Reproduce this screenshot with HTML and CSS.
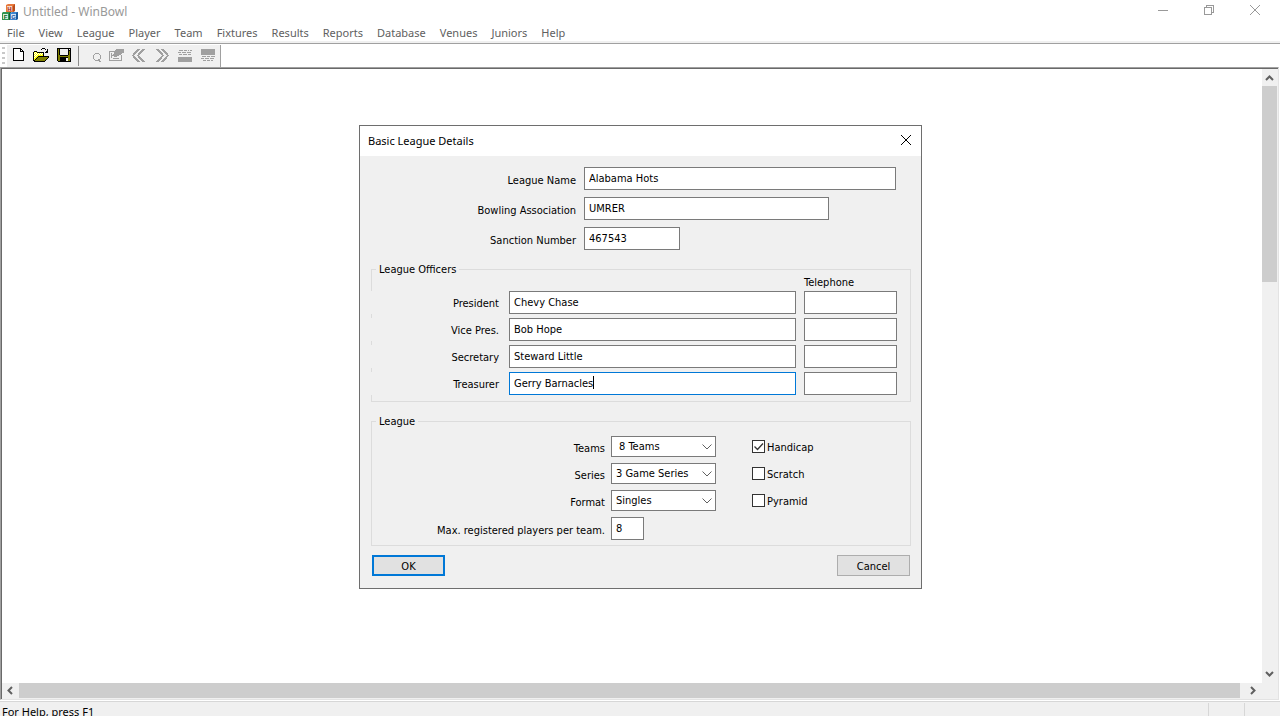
FILE: index.html
```html
<!DOCTYPE html>
<html lang="en">
<head>
<meta charset="utf-8">
<title>Untitled - WinBowl</title>
<link rel="stylesheet" href="styles.css">
</head>
<body>
<div class="app">
  <header class="titlebar">
    <svg class="app-icon" width="18" height="18" viewBox="0 0 18 18" aria-hidden="true">
      <path fill="#e8783c" d="M5 2l2-1h7v7l-2 1H5z"/><path fill="#b84c1c" d="M12 3l2-2v7l-2 1z"/>
      <path fill="#2f9350" d="M1 10l1-1h8v8H1z"/><path fill="#14602c" d="M8 10l2-1v7l-2 1z"/>
      <path fill="#3d86d0" d="M9 10l2-1h6v7l-2 1H9z"/><path fill="#1c5a9c" d="M15 10l2-1v7l-2 1z"/>
      <path fill="#f4d9c4" d="M6 3h5v5H6z"/><path fill="#d6efdc" d="M2 11h5v5H2z"/><path fill="#d3e6f8" d="M10 11h5v5h-5z"/>
      <text class="cube" x="8.500" y="8" fill="#a01818">H</text>
      <text class="cube" x="4.500" y="16" fill="#0c6020">F</text>
      <text class="cube" x="12.500" y="16" fill="#1850a0">G</text>
    </svg>
    <h1 class="app-title">Untitled - WinBowl</h1>
    <div class="caption">
      <button class="caption-btn" aria-label="Minimize"><svg width="10" height="10" viewBox="0 0 10 10"><path d="M0 5.500h10"/></svg></button>
      <button class="caption-btn" aria-label="Restore"><svg width="10" height="10" viewBox="0 0 10 10"><path d="M.5 2.500h7v7h-7zM2.500 2.500v-2h7v7h-2"/></svg></button>
      <button class="caption-btn" aria-label="Close"><svg width="10" height="10" viewBox="0 0 10 10"><path class="smooth" d="M0 0l10 10M10 0L0 10"/></svg></button>
    </div>
  </header>
  <nav class="menubar">
    <a href="#">File</a><a href="#">View</a><a href="#">League</a><a href="#">Player</a><a href="#">Team</a><a href="#">Fixtures</a><a href="#">Results</a><a href="#">Reports</a><a href="#">Database</a><a href="#">Venues</a><a href="#">Juniors</a><a href="#">Help</a>
  </nav>
  <div class="toolbar">
    <span class="grip"></span>
    <div class="tools">
      <button class="tool" aria-label="New"><svg width="16" height="15" viewBox="0 0 16 15"><path fill="#fff" stroke="#000" d="M3.500 .5h7l3 3v9h-10zM10.500 .5v3h3"/></svg></button>
      <button class="tool" aria-label="Open"><svg width="16" height="15" viewBox="0 0 16 15"><path fill="#ff0" d="M1 4h3v1h6v3H5v1H4v1H3v1H2v1H1z"/><path fill="#fff" d="M2 4h1v1H2zM1 5h1v1H1zM3 5h1v1H3zM5 5h1v1H5zM7 5h1v1H7zM9 5h1v1H9zM2 6h1v1H2zM4 6h1v1H4zM6 6h1v1H6zM8 6h1v1H8zM1 7h1v1H1zM3 7h1v1H3zM2 8h1v1H2zM1 9h1v1H1z"/><path fill="#808000" d="M5 9h10v1h-1v1h-1v1h-1v1H2v-1h1v-1h1v-1h1z"/><path fill="#000" d="M9 0h3v1H9zM8 1h1v1H8zM12 1h1v1h1V1h1v4h-3V4h1V3h1V2h-2zM1 3h3v1H1zM0 4h1v9H0zM4 4h7v4h-1V5H4zM5 8h11v1H5zM4 9h1v1H4zM3 10h1v1H3zM2 11h1v1H2zM1 12h1v1H1zM15 9h1v1h-1zM14 10h1v1h-1zM13 11h1v1h-1zM12 12h1v1h-1zM1 13h11v1H1z"/></svg></button>
      <button class="tool" aria-label="Save"><svg width="16" height="15" viewBox="0 0 16 15"><path fill="#000" d="M1 0h14v14H2l-1-1z"/><path fill="#808000" d="M2 1h1v6h1v1h8V7h1V3h1v10h-2V9H4v4H2z"/><path fill="#f0f0f0" d="M4 1h8v6H4zM13 1h1v1h-1zM10 10h2v3h-2z"/></svg></button>
      <span class="tool-sep"></span>
      <button class="tool" disabled aria-label="Find"><svg width="16" height="15" viewBox="0 0 16 15"><path class="line" d="M10.500 5.500h3l2 2v3l-2 2h-3l-2-2v-3zM13 11.500h2M14 13.500h2M14.500 11v3"/></svg></button>
      <button class="tool" disabled aria-label="Properties"><svg width="16" height="15" viewBox="0 0 16 15"><path class="line" d="M7 3.500H1.500v9h12V7M3.500 5v5M5 10.500h6"/><path class="fill" d="M8 1h8v4h-2v1h-1v1h-2v1H9v1H6V8H4V7h1V6h1V4h1V2h1z"/></svg></button>
      <button class="tool" disabled aria-label="Previous"><svg width="16" height="15" viewBox="0 0 16 15"><path class="thick" d="M8 1L2 7.500 8 14M13 1L7 7.500l6 6.500"/></svg></button>
      <button class="tool" disabled aria-label="Next"><svg width="16" height="15" viewBox="0 0 16 15"><path class="thick" d="M3 1l6 6.500L3 14M8 1l6 6.500L8 14"/></svg></button>
      <button class="tool" disabled aria-label="Group above"><svg width="16" height="15" viewBox="0 0 16 15"><path class="line" d="M2 2.500h4M7 2.500h3M11 2.500h1M13 2.500h2M1 4.500h3M5 4.500h4M10 4.500h4M2 6.500h3M6 6.500h4M11 6.500h3"/><path class="fill" d="M1 9h14v5H1z"/></svg></button>
      <button class="tool" disabled aria-label="Group below"><svg width="16" height="15" viewBox="0 0 16 15"><path class="fill" d="M1 1h14v6H1z"/><path class="line" d="M2 8.500h4M7 8.500h3M11 8.500h4M1 10.500h3M5 10.500h4M10 10.500h4M3 12.500h3M7 12.500h3M11 12.500h2"/></svg></button>
    </div>
  </div>
  <main class="workspace">
    <div class="canvas"></div>
    <div class="vscroll">
      <button class="sb-btn" aria-label="Scroll up"><svg width="9" height="8" viewBox="0 0 9 8"><path d="M1 6l3.500-3.500L8 6"/></svg></button>
      <div class="v-thumb"></div><div class="sb-track"></div>
      <button class="sb-btn" aria-label="Scroll down"><svg width="9" height="8" viewBox="0 0 9 8"><path d="M1 1l3.500 3.500L8 1"/></svg></button>
    </div>
    <div class="hscroll">
      <button class="sb-btn" aria-label="Scroll left"><svg width="8" height="9" viewBox="0 0 8 9"><path d="M5 1L1.500 4.500 5 8"/></svg></button>
      <div class="h-thumb"></div>
      <button class="sb-btn sb-end" aria-label="Scroll right"><svg width="8" height="9" viewBox="0 0 8 9"><path d="M2 1l3.500 3.500L2 8"/></svg></button>
    </div>
    <div class="sb-corner"></div>
  </main>
  <footer class="statusbar"><span class="status-text">For Help, press F1</span><span class="pane"></span><span class="pane"></span></footer>
</div>

<div class="overlay">
  <form class="dialog" role="dialog" aria-labelledby="dlg-title">
    <div class="dlg-head">
      <h2 class="dlg-title" id="dlg-title">Basic League Details</h2>
      <button type="button" class="dlg-close" aria-label="Close"><svg width="12" height="12" viewBox="0 0 12 12"><path d="M1 1l10 10M11 1L1 11"/></svg></button>
    </div>
    <div class="dlg-body">
      <div class="basics">
        <label for="name">League Name</label><input class="field w-name" id="name" value="Alabama Hots">
        <label for="assoc">Bowling Association</label><input class="field w-assoc" id="assoc" value="UMRER">
        <label for="sanction">Sanction Number</label><input class="field w-sanction" id="sanction" value="467543">
      </div>
      <fieldset class="group officers">
        <legend>League Officers</legend>
        <span class="tel-head" id="tel">Telephone</span>
        <label for="pres">President</label><input class="field" id="pres" value="Chevy Chase"><input class="field" aria-labelledby="tel">
        <label for="vice">Vice Pres.</label><input class="field" id="vice" value="Bob Hope"><input class="field" aria-labelledby="tel">
        <label for="sec">Secretary</label><input class="field" id="sec" value="Steward Little"><input class="field" aria-labelledby="tel">
        <label for="treas">Treasurer</label><span class="active-wrap"><input class="field current" id="treas" value="Gerry Barnacles"><span class="caret"></span></span><input class="field" aria-labelledby="tel">
      </fieldset>
      <fieldset class="group settings">
        <legend>League</legend>
        <label for="teams">Teams</label>
        <span class="combo"><select id="teams" class="indent"><option>8 Teams</option></select><svg width="10" height="6" viewBox="0 0 10 6"><path d="M.5 .5L5 5 9.500 .5"/></svg></span>
        <label class="check"><input type="checkbox" checked>Handicap</label>
        <label for="series">Series</label>
        <span class="combo"><select id="series"><option>3 Game Series</option></select><svg width="10" height="6" viewBox="0 0 10 6"><path d="M.5 .5L5 5 9.500 .5"/></svg></span>
        <label class="check"><input type="checkbox">Scratch</label>
        <label for="format">Format</label>
        <span class="combo"><select id="format"><option>Singles</option></select><svg width="10" height="6" viewBox="0 0 10 6"><path d="M.5 .5L5 5 9.500 .5"/></svg></span>
        <label class="check"><input type="checkbox">Pyramid</label>
        <label for="max">Max. registered players per team.</label><input class="field w-max" id="max" value="8">
      </fieldset>
      <div class="actions">
        <button type="submit" class="btn btn-default">OK</button>
        <button type="button" class="btn">Cancel</button>
      </div>
    </div>
  </form>
</div>
</body>
</html>
```

FILE: styles.css
```css
* { box-sizing: border-box; }
body { margin: 0; background: #fff; overflow: hidden; font: 11px/14px "DejaVu Sans Condensed", "Noto Sans", sans-serif; color: #000; }
h1, h2 { margin: 0; font-weight: 400; }
button, input, select { font: inherit; color: inherit; margin: 0; border-radius: 0; }
button { padding: 0; border: 0; background: none; }
svg { display: block; fill: none; shape-rendering: crispEdges; }

.app { display: flex; flex-direction: column; height: 100vh; }
.titlebar { display: flex; align-items: center; height: 24px; padding-left: 1px; flex: none; }
.app-icon { margin-right: 4px; shape-rendering: auto; }
.cube { font: bold 6px "Liberation Sans", sans-serif; text-anchor: middle; }
.app-title { font: 12px/16px "Noto Sans", sans-serif; color: #999; flex: 1; }
.caption { display: flex; align-self: flex-start; padding-right: 2px; }
.caption-btn { display: grid; place-items: center; width: 46px; height: 20px; }
.caption-btn svg { stroke: #999; }
.smooth { shape-rendering: auto; }

.menubar { display: flex; gap: 14px; height: 19px; padding: 1px 7px 0; flex: none; border-bottom: 2px solid #f0f0f0; font: 11px/16px "Noto Sans", sans-serif; }
.menubar a { color: #606060; text-decoration: none; }

.toolbar { display: flex; flex: none; height: 24px; border-top: 1px solid #a0a0a0; padding-top: 1px; }
.grip { width: 3px; margin: 2px 2px 0; background: repeating-linear-gradient(#c8c8c8 0 2px, #fff 2px 5px); }
.tools { display: flex; background: #f0f0f0; border-right: 1px solid #a0a0a0; }
.tool { display: grid; place-items: center; width: 23px; padding: 0 1px 1px 0; }
.tool-sep { width: 1px; margin: 1px 3px 1px 2px; background: #8c8c8c; }
.line { stroke: #a0a0a0; }
.fill { fill: #a0a0a0; }
.thick { stroke: #a0a0a0; stroke-width: 2; }

.workspace { flex: 1; display: grid; grid-template: 1fr 16px / 1fr 16px; border: 1px solid; border-color: #a0a0a0 #e3e3e3 #e3e3e3 #a0a0a0; margin-right: 1px; padding: 1px 0 0 1px; background: #696969; }
.canvas { background: #fff; }
.vscroll { display: flex; flex-direction: column; background: #f0f0f0; padding-right: 1px; }
.v-thumb { flex: 0 0 32%; background: #cdcdcd; }
.sb-track { flex: 1; }
.hscroll { display: flex; background: #f0f0f0; padding-bottom: 1px; }
.h-thumb { flex: 1; background: #cdcdcd; }
.sb-btn { display: grid; place-items: center; min-width: 15px; min-height: 15px; flex: 0 0 17px; }
.sb-end { flex-basis: 22px; padding-left: 4px; }
.sb-btn svg { stroke: #606060; stroke-width: 2; shape-rendering: auto; }
.sb-corner { background: #f0f0f0; }

.statusbar { display: flex; flex: none; height: 15px; margin-top: 1px; border-top: 1px solid #d7d7d7; background: #f0f0f0; overflow: hidden; font: 11px/16px "Noto Sans", sans-serif; }
.status-text { flex: 1; padding: 2px 2px 0; }
.pane { width: 36px; border-left: 1px solid #d7d7d7; margin-top: 1px; }

.overlay { position: fixed; inset: 0; display: flex; align-items: center; justify-content: center; padding: 0 0 2px 1px; }
.dialog { width: 563px; border: 1px solid #6e6e6e; background: #f0f0f0; }
.dlg-head { display: flex; align-items: center; justify-content: space-between; height: 30px; padding: 0 9px 2px 8px; background: #fff; }
.dlg-title { font: 11px/16px "Noto Sans", sans-serif; padding-top: 2px; }
.dlg-close svg { stroke: #000; shape-rendering: auto; }
.dlg-body { padding: 11px 10px 12px 11px; }

.field { width: 100%; height: 23px; border: 1px solid #7a7a7a; padding: 0 4px 1px; background: #fff; outline: 0; }
.basics { display: grid; grid-template-columns: 205px 1fr; gap: 7px 8px; align-items: center; }
.basics label, .settings label { text-align: right; padding-top: 4px; }
.w-name { width: 312px; }
.w-assoc { width: 245px; }
.w-sanction { width: 96px; }
.w-max { width: 33px; }

.group { min-width: 0; margin: 0; padding: 0; border: 1px solid #dcdcdc; display: grid; align-items: center; }
legend { padding: 2px 3px 0; margin-left: 4px; line-height: 12px; }
.officers { grid-template-columns: 129px 1fr 93px; gap: 4px 8px; margin-top: 12px; padding-right: 13px; padding-bottom: 6px; }
.officers label { height: 23px; line-height: 21px; margin-left: -1px; padding: 2px 2px 0 0; text-align: right; background: #f0f0f0; }
.tel-head { grid-column: 3; height: 11px; line-height: 13px; }
.active-wrap { position: relative; display: block; }
.field.current { border-color: #0078d7; }
.caret { position: absolute; left: 84px; top: 4px; width: 1px; height: 13px; background: #000; }

.settings { grid-template-columns: 233px 105px 1fr; gap: 6px; margin-top: 12px; padding-top: 8px; padding-bottom: 5px; }
.combo { display: grid; align-items: center; }
.combo > * { grid-area: 1 / 1; }
.combo select { appearance: none; width: 100%; height: 21px; border: 1px solid #7a7a7a; padding: 0 4px; background: #fff; }
.combo .indent { padding-left: 7px; }
.combo svg { justify-self: end; margin-right: 4px; stroke: #606060; pointer-events: none; shape-rendering: auto; }
.settings .check { display: flex; align-items: flex-start; gap: 2px; height: 21px; line-height: 15px; text-align: left; padding: 4px 0 0 30px; }
.check input { appearance: none; width: 13px; height: 13px; border: 1px solid #333; background: #fff; }
.check input:checked { background: #fff url("data:image/svg+xml,%3Csvg xmlns='http://www.w3.org/2000/svg' viewBox='0 0 11 11'%3E%3Cpath d='M1.500 5.500l3 3 5.500-6' fill='none' stroke='%23333' stroke-width='1.300'/%3E%3C/svg%3E"); }

.actions { display: flex; justify-content: space-between; margin-top: 9px; padding: 0 1px; }
.btn { width: 73px; height: 21px; border: 1px solid #adadad; padding-top: 2px; background: #e1e1e1; }
.btn-default { border: 2px solid #0078d7; }
```
